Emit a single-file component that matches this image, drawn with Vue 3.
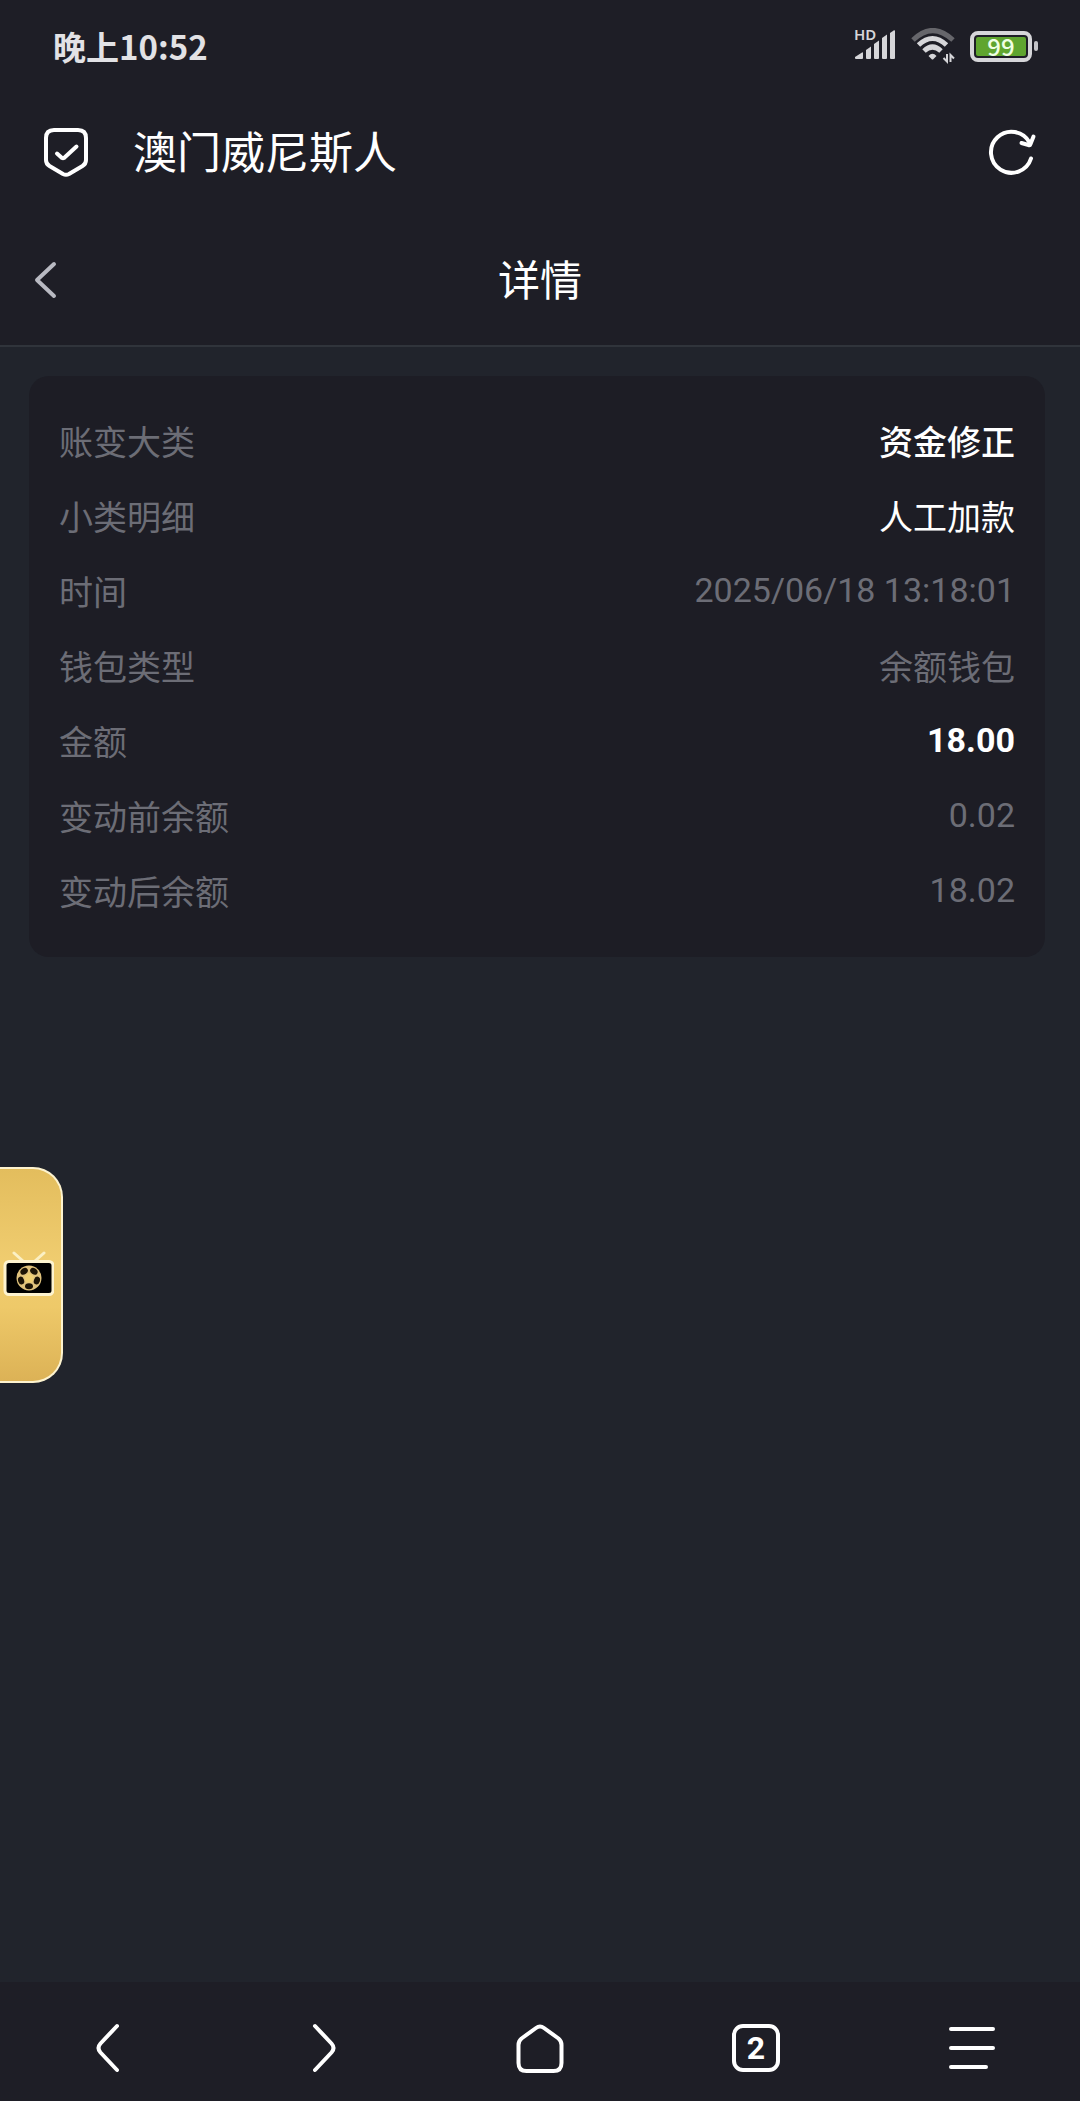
<script setup>
const rows = [
  { label: '账变大类', value: '资金修正', tone: 'medium' },
  { label: '小类明细', value: '人工加款', tone: 'bright' },
  { label: '时间', value: '2025/06/18 13:18:01', tone: 'number' },
  { label: '钱包类型', value: '余额钱包' },
  { label: '金额', value: '18.00', tone: 'number amount' },
  { label: '变动前余额', value: '0.02', tone: 'number' },
  { label: '变动后余额', value: '18.02', tone: 'number' },
]
const tabCount = 2
const battery = 99
// Five outer patches of the football, spread evenly round the middle one
const patches = [36, 108, 180, 252, 324]
</script>

<template>
  <div class="screen">
    <div class="status">
      <time class="clock">晚上10:52</time>
      <div class="indicators">
        <svg class="signal" width="44" height="48" viewBox="1 -6 44 48" aria-hidden="true">
          <text x="1" y="12" class="hd">HD</text>
          <g fill="#d6d6d9">
            <path d="M2 29 L9 24.500 Q10 24 10 25 V30 Q10 31 9 31 H3 Q2 31 2 30Z" />
            <path d="M13 22 L18 18.500 V30 Q18 31 17 31 H14 Q13 31 13 30Z" />
            <path d="M21 16 L26 12.500 V30 Q26 31 25 31 H22 Q21 31 21 30Z" />
            <path d="M29 10 L34 6.500 V30 Q34 31 33 31 H30 Q29 31 29 30Z" />
            <path d="M37 5 L41 2.200 Q42 2 42 3 V30 Q42 31 41 31 H38 Q37 31 37 30Z" />
          </g>
        </svg>
        <svg class="wifi" width="44" height="36" viewBox="0 0 44 36" fill="none" aria-hidden="true">
          <path d="M2 12 Q21.500 -7 42 12" stroke="#66666b" stroke-width="5" />
          <path d="M7.500 17 Q21.500 4 35.500 17" stroke="#d6d6d9" stroke-width="5" />
          <path d="M13 23 Q21.500 15 30 23" stroke="#d6d6d9" stroke-width="5" />
          <path d="M17.500 28 Q21.500 23.500 25.500 28 L22.500 31 Q21.500 32 20.500 31Z" fill="#d6d6d9" />
          <path d="M36 26 V33.500 L32.500 30 M39.500 34 V27 L43 30.500" stroke="#d6d6d9" stroke-width="2" />
        </svg>
        <div class="battery">
          <div class="cell"><span class="percent">{{ battery }}</span></div>
          <i class="nub"></i>
        </div>
      </div>
    </div>

    <header class="address">
      <button class="icon" type="button" aria-label="网站安全">
        <svg width="48" height="52" viewBox="0 0 48 52" fill="none" stroke="#fff" stroke-width="4" stroke-linecap="round" stroke-linejoin="round">
          <path d="M12 4 H36 Q44 4 44 12 V34 Q44 38 40.500 40 L27 48 Q24 49.500 21 48 L7.500 40 Q4 38 4 34 V12 Q4 4 12 4Z" />
          <path d="M15 27.500 L20 32 Q21 32.500 22 32 L34.500 20.500" />
        </svg>
      </button>
      <span class="site">澳门威尼斯人</span>
      <button class="icon" type="button" aria-label="刷新">
        <svg width="52" height="52" viewBox="-1 2 52 52" fill="none" stroke="#fff" stroke-width="4" stroke-linecap="round" stroke-linejoin="round">
          <path d="M44 34.500 A20.500 20.500 0 1 1 42.500 18.500" />
          <path d="M34.500 19 L41.500 21 Q43 21.500 43.500 20 L46.500 12.500" />
        </svg>
      </button>
    </header>

    <div class="titlebar">
      <button class="icon" type="button" aria-label="返回">
        <svg width="26" height="40" viewBox="0 0 26 40" fill="none" stroke="#b9bac2" stroke-width="4" stroke-linecap="round" stroke-linejoin="round">
          <path d="M22 4 L5 20 L22 36" />
        </svg>
      </button>
      <h1>详情</h1>
    </div>

    <main>
      <dl class="card">
        <div v-for="row in rows" :key="row.label" class="row">
          <dt>{{ row.label }}</dt>
          <dd :class="row.tone">{{ row.value }}</dd>
        </div>
      </dl>
    </main>

    <button class="live" type="button" aria-label="直播">
      <svg width="54" height="48" viewBox="-1 1 54 48">
        <path d="M13 3 L22 11 M43 3 L34 11" stroke="#fbf0c4" stroke-width="3" stroke-linecap="round" fill="none" />
        <rect x="4" y="11.500" width="48" height="33" rx="4" fill="#000" stroke="#fdf3cf" stroke-width="3" />
        <circle cx="28" cy="28" r="12.500" fill="#e0c27c" />
        <path d="M28 23 L33 26.500 L31 32.500 H25 L23 26.500Z" fill="#f0d074" />
        <ellipse v-for="a in patches" :key="a" cx="28" cy="19.700" rx="4" ry="3" fill="#1d1406" :transform="`rotate(${a} 28 28)`" />
      </svg>
    </button>

    <nav class="toolbar">
      <button type="button" aria-label="后退">
        <svg width="52" height="52" viewBox="0 0 52 52">
          <path d="M35 4 L18.500 21.500 Q14.500 26 18.500 30.500 L35 48" />
        </svg>
      </button>
      <button type="button" aria-label="前进">
        <svg width="52" height="52" viewBox="0 0 52 52">
          <path d="M17 4 L33.500 21.500 Q37.500 26 33.500 30.500 L17 48" />
        </svg>
      </button>
      <button type="button" aria-label="主页">
        <svg width="52" height="52" viewBox="0 0 52 52">
          <path d="M22 6 Q26 3 30 6 L44.500 16.500 Q47.500 19 47.500 23 V41 Q47.500 49 39.500 49 H12.500 Q4.500 49 4.500 41 V23 Q4.500 19 7.500 16.500Z" />
        </svg>
      </button>
      <button type="button" aria-label="标签页">
        <span class="tabs">{{ tabCount }}</span>
      </button>
      <button type="button" aria-label="菜单">
        <svg width="52" height="52" viewBox="0 0 52 52">
          <path d="M5 7 H47 M5 26 H47 M5 45 H40" />
        </svg>
      </button>
    </nav>
  </div>
</template>

<style>
body {
  margin: 0;
  background: #21242c;
}
</style>

<style scoped>
.screen {
  position: relative;
  display: flex;
  flex-direction: column;
  min-height: 100vh;
  background: #21242c;
  color: #fff;
  font-family: Roboto, "Noto Sans CJK SC", sans-serif;
}

button {
  display: flex;
  align-items: center;
  justify-content: center;
  padding: 0;
  border: 0;
  background: none;
  color: inherit;
  font: inherit;
}

.status,
.address,
.titlebar,
.toolbar {
  background: #1e1e26;
}

.status {
  display: flex;
  align-items: center;
  justify-content: space-between;
  height: 92px;
  padding: 0 42px 0 53px;
}

.clock {
  color: #e2e2e5;
  font: 700 33px/48px "Noto Sans CJK SC", sans-serif;
}

.indicators {
  display: flex;
  align-items: center;
}

.wifi {
  margin: 0 15px 0 13px;
}

.hd {
  fill: #d6d6d9;
  font: 600 15px "Noto Sans", sans-serif;
}

.battery {
  display: flex;
  align-items: center;
  gap: 2px;
}

.cell {
  display: flex;
  align-items: center;
  justify-content: center;
  box-sizing: border-box;
  width: 62px;
  height: 31px;
  border: 4px solid #d6d6d9;
  border-radius: 8px;
  background: #5fa52f content-box;
  padding: 2px;
}

.percent {
  color: #efffe4;
  font: 500 24px/20px "Noto Sans CJK SC", sans-serif;
}

.nub {
  width: 4px;
  height: 10px;
  border-radius: 2px;
  background: #c4c4c8;
}

.address {
  display: flex;
  align-items: center;
  height: 120px;
  padding: 0 42px;
}

.site {
  flex: 1;
  margin-left: 43px;
  padding-top: 4px;
  font-size: 44px;
  line-height: 60px;
}

.titlebar {
  display: grid;
  grid-template-columns: 60px 1fr 60px;
  align-items: center;
  height: 130px;
  padding: 3px 16px 0;
  border-bottom: 2px solid #30343b;
}

.titlebar .icon {
  justify-content: flex-start;
  padding-left: 16px;
}

h1 {
  margin: 0;
  padding-top: 4px;
  font-size: 42px;
  font-weight: 400;
  line-height: 60px;
  text-align: center;
}

main {
  flex: 1;
  padding: 29px 35px 29px 29px;
}

.card {
  margin: 0;
  padding: 30px 30px 26px;
  border-radius: 20px;
  background: #1d1d25;
  font-size: 34px;
  line-height: 75px;
}

.row {
  display: flex;
  align-items: flex-start;
  justify-content: space-between;
  color: #6c6d76;
}

dd {
  margin: 0;
}

.number {
  line-height: 68px;
}

.bright,
.medium,
.amount {
  color: #fff;
}

.medium {
  font-weight: 500;
}

.amount {
  font-weight: 700;
}

.live {
  position: absolute;
  top: 1167px;
  left: 0;
  box-sizing: border-box;
  width: 63px;
  height: 216px;
  border: 2px solid #fdf3cf;
  border-left: 0;
  border-radius: 0 30px 30px 0;
  background: linear-gradient(#e3bd5d, #f0cd70 45%, #eec969 65%, #dcb256);
  justify-content: flex-start;
}

.toolbar {
  display: grid;
  grid-template-columns: repeat(5, 1fr);
  height: 119px;
}

.toolbar svg {
  fill: none;
  stroke: #fff;
  stroke-width: 4;
  stroke-linecap: round;
  stroke-linejoin: round;
}

.toolbar button {
  padding-top: 13px;
}

.tabs {
  box-sizing: border-box;
  width: 48px;
  height: 48px;
  border: 4px solid #fff;
  border-radius: 11px;
  font-size: 32px;
  font-weight: 700;
  line-height: 40px;
}
</style>
